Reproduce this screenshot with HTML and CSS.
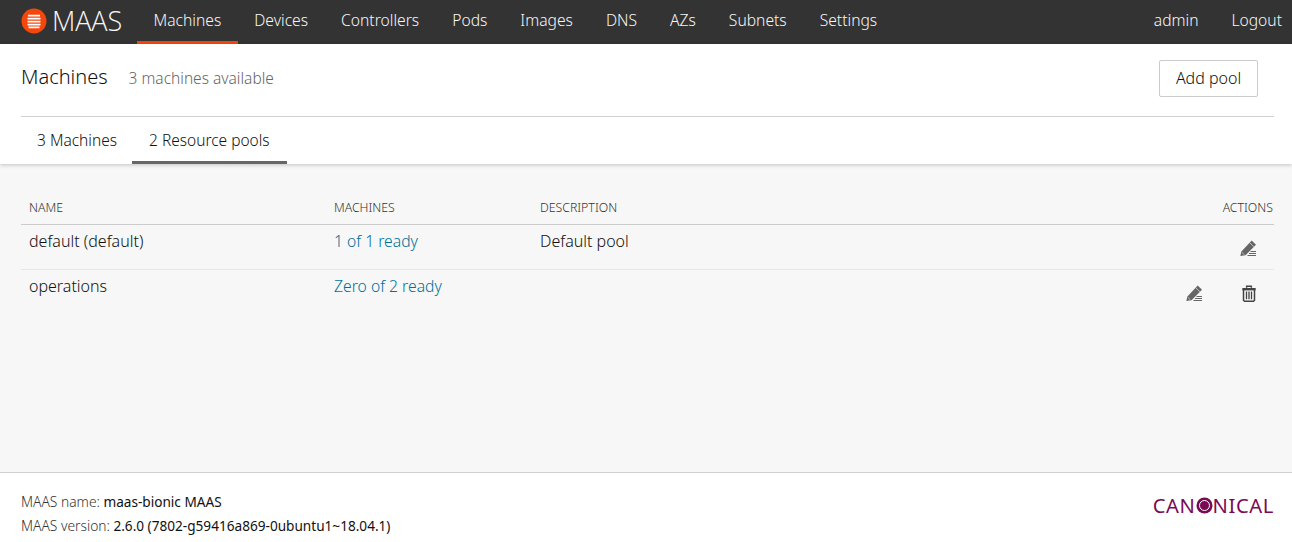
FILE: index.html
```html
<!DOCTYPE html>
<html lang="en">
<head>
<meta charset="utf-8">
<title>Resource pools | MAAS</title>
<link rel="stylesheet" href="styles.css">
</head>
<body>
<header class="topbar">
  <a class="brand" href="#">
    <svg class="brand-icon" width="26" height="26" viewBox="0 0 26 26" aria-hidden="true">
      <circle cx="13" cy="13" r="12.5" fill="#f5470c"/>
      <path d="M7 7.600h12M6.500 10.600h13M6.500 13.600h13M6.500 16.600h13M7.500 19.400h11" stroke="#fff" stroke-width="1.600" fill="none"/>
    </svg>
    <span class="brand-name">MAAS</span>
  </a>
  <nav class="nav-main">
    <a class="nav-link is-active" href="#">Machines</a>
    <a class="nav-link" href="#">Devices</a>
    <a class="nav-link" href="#">Controllers</a>
    <a class="nav-link" href="#">Pods</a>
    <a class="nav-link" href="#">Images</a>
    <a class="nav-link" href="#">DNS</a>
    <a class="nav-link" href="#">AZs</a>
    <a class="nav-link" href="#">Subnets</a>
    <a class="nav-link" href="#">Settings</a>
  </nav>
  <nav class="nav-user">
    <a class="nav-link" href="#">admin</a>
    <a class="nav-link" href="#">Logout</a>
  </nav>
</header>
<section class="page-head">
  <div class="title-row">
    <div class="title-group">
      <h1 class="page-title">Machines</h1>
      <span class="page-sub">3 machines available</span>
    </div>
    <button class="btn">Add pool</button>
  </div>
  <div class="tabs">
    <a class="tab" href="#">3 Machines</a>
    <a class="tab is-active" href="#">2 Resource pools</a>
  </div>
</section>
<main class="content">
  <table class="pools">
    <thead>
      <tr><th class="col-name">Name</th><th class="col-machines">Machines</th><th>Description</th><th class="col-actions">Actions</th></tr>
    </thead>
    <tbody>
      <tr>
        <td>default (default)</td>
        <td><a class="link" href="#">1 of 1 ready</a></td>
        <td>Default pool</td>
        <td class="cell-actions">
          <div class="actions">
            <button class="icon-btn" aria-label="Edit"><svg width="18" height="18" viewBox="0 0 18 18"><path d="M0.300 16L1.400 11.500 11.700 .5 16 4.700 5.500 15.300z" fill="#666"/><path d="M9.700 2.700l4.200 4.100M1.800 12.300l2.700 2.600" stroke="#f7f7f7" stroke-width=".6"/><path d="M10.500 11.500H16M9 13.500h7M7.500 15.500H16" stroke="#666" stroke-width="1"/></svg></button>
          </div>
        </td>
      </tr>
      <tr>
        <td>operations</td>
        <td><a class="link" href="#">Zero of 2 ready</a></td>
        <td></td>
        <td class="cell-actions">
          <div class="actions">
            <button class="icon-btn" aria-label="Edit"><svg width="18" height="18" viewBox="0 0 18 18"><path d="M0.300 16L1.400 11.500 11.700 .5 16 4.700 5.500 15.300z" fill="#666"/><path d="M9.700 2.700l4.200 4.100M1.800 12.300l2.700 2.600" stroke="#f7f7f7" stroke-width=".6"/><path d="M10.500 11.500H16M9 13.500h7M7.500 15.500H16" stroke="#666" stroke-width="1"/></svg></button>
            <button class="icon-btn" aria-label="Delete"><svg width="18" height="18" viewBox="0 0 18 18"><path d="M6.600 2.800V1.200h4.800v1.600" fill="none" stroke="#444" stroke-width="1.400"/><path d="M2.300 3h13.400v2.400H2.300z" fill="#444"/><path d="M3.500 5v10.300l1 1h9l1-1V5" fill="none" stroke="#444" stroke-width="1.500"/><path d="M6.500 6.500v7.800M9 6.500v7.800M11.500 6.500v7.800" stroke="#444" stroke-width="1.300" fill="none"/></svg></button>
          </div>
        </td>
      </tr>
    </tbody>
  </table>
</main>
<footer class="footer">
  <div class="footer-info">
    <p class="footer-line"><span class="label">MAAS name:</span> <span class="strong">maas-bionic MAAS</span></p>
    <p class="footer-line"><span class="label">MAAS version:</span> <span class="strong">2.6.0 (7802-g59416a869-0ubuntu1~18.04.1)</span></p>
  </div>
  <div class="canonical">CAN<svg class="canonical-o" width="17" height="17" viewBox="0 0 17 17" aria-hidden="true"><circle cx="8.500" cy="8.500" r="8" fill="#7b0a55"/><circle cx="8.500" cy="8.500" r="5" fill="none" stroke="#fff" stroke-width="1"/></svg>NICAL</div>
</footer>
</body>
</html>
```
FILE: styles.css
```css
* { box-sizing: border-box; }
html, body { margin: 0; height: 100%; }
body {
  font-family: "Noto Sans", "Open Sans", sans-serif;
  font-size: 16px;
  color: #111;
  background: #f7f7f7;
  display: flex;
  flex-direction: column;
  overflow: hidden;
}
a { text-decoration: none; color: inherit; }

.topbar {
  height: 44px;
  flex: none;
  background: #333;
  color: #f7f7f7;
  display: flex;
  align-items: stretch;
  padding-left: 21px;
}
.brand { display: flex; align-items: center; width: 116px; }
.brand-icon { flex: none; margin-right: 6px; margin-top: -3px; }
.brand-name { font-size: 27px; font-weight: 300; letter-spacing: -0.1px; font-family: "Open Sans", sans-serif; color: #f7f7f7; margin: -3px 0 0 -1px; }
.nav-main { display: flex; flex: 1; }
.nav-user { display: flex; }
.nav-link {
  display: flex;
  align-items: center;
  padding: 0 16.500px 1px;
  font-size: 15.650px;
  font-weight: 300;
  color: #f7f7f7;
  border-bottom: 3px solid transparent;
}
.nav-link.is-active { border-bottom-color: #f5470c; }
.nav-user .nav-link { padding: 0 10px 1px 23px; }

.page-head { background: #fff; flex: none; padding: 0 18px 0 21px; box-shadow: 0 1px 4px rgba(0,0,0,.22); position: relative; }
.title-row { height: 73px; border-bottom: 1px solid #d0d0d0; display: flex; align-items: center; justify-content: space-between; padding: 0 16px 8px 0; }
.title-group { display: flex; align-items: baseline; gap: 21px; }
.page-title { margin: 0; font-size: 20px; font-weight: 300; color: #111; }
.page-sub { font-size: 15.500px; color: #666; font-weight: 300; }
.btn {
  width: 99px; height: 37px; margin-top: 5px; padding: 0 0 2px;
  font: inherit; font-size: 16px; font-weight: 300; color: #111;
  background: #fff; border: 1px solid #ccc; border-radius: 2px;
}
.tabs { display: flex; height: 47px; }
.tab { display: flex; align-items: center; padding: 2px 15px 0 16px; font-size: 15.500px; font-weight: 300; color: #111; border-bottom: 3px solid transparent; }
.tab.is-active { padding: 2px 17px 0; border-bottom-color: #666; }

.content { flex: 1; padding: 27px 18px 0 21px; min-height: 0; }
.pools { width: 100%; border-collapse: collapse; table-layout: fixed; }
.pools th {
  font-size: 12.300px; font-weight: 300; text-transform: uppercase; text-align: left; color: #333;
  height: 33px; padding: 0 0 0 8px; border-bottom: 1px solid #ccc; vertical-align: middle;
}
.pools th.col-name { width: 305px; }
.pools th.col-machines { width: 206px; }
.pools th.col-actions { width: 120px; text-align: right; padding-right: 1px; }
.pools td { height: 45px; padding: 6px 0 0 8px; vertical-align: top; border-bottom: 1px solid #e6e6e6; font-size: 16px; font-weight: 300; line-height: 20px; }
.pools tbody tr:last-child td { border-bottom: 0; }
.link { color: #00709a; font-size: 15.700px; }
.pools td.cell-actions { padding: 0; }
.actions { display: flex; justify-content: flex-end; gap: 36px; padding: 15px 16px 0 0; }
.icon-btn { width: 18px; height: 18px; padding: 0; border: 0; background: none; display: block; }
.icon-btn svg { display: block; }

.footer {
  flex: none; height: 70px; background: #fff; border-top: 1px solid #d0d0d0;
  display: flex; justify-content: space-between; align-items: flex-start;
  padding: 17px 18px 0 21px;
}
.footer-line { margin: 0; font-size: 13.620px; line-height: 24px; }
.label { color: #333; font-weight: 300; font-size: 13.800px; }
.strong { color: #111; font-weight: 400; }
.canonical { display: flex; align-items: center; font-size: 20.200px; font-weight: 400; letter-spacing: .6px; color: #7b0a55; line-height: 24px; margin-top: 3px; }
.canonical-o { margin: 0; }
```
